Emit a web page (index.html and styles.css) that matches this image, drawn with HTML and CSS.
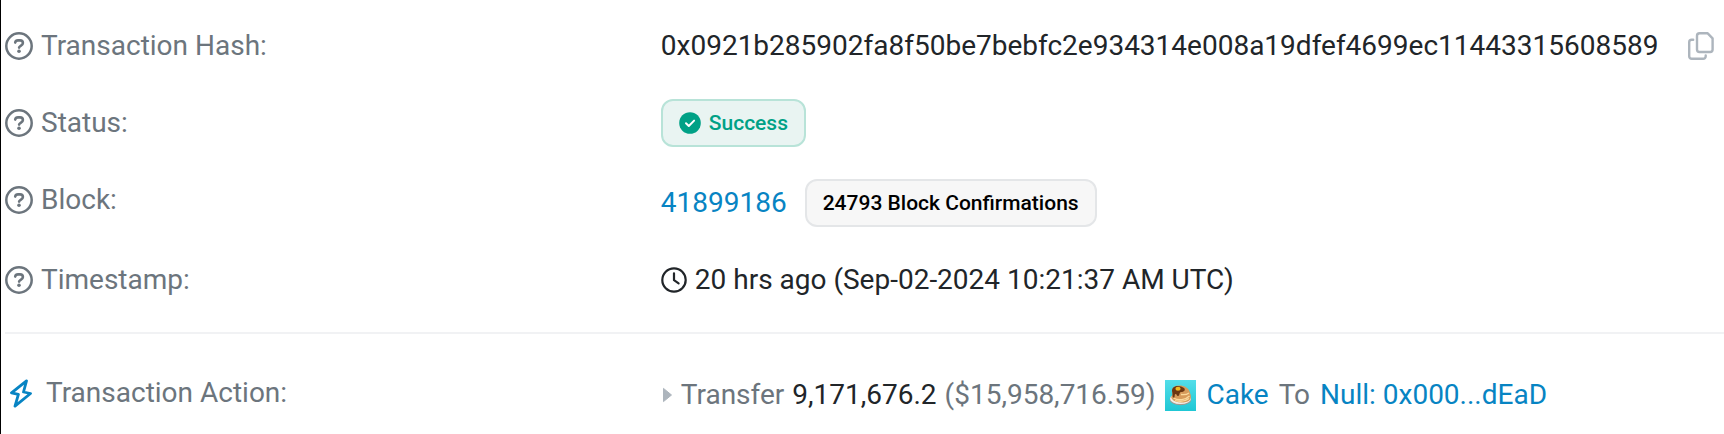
FILE: index.html
```html
<!DOCTYPE html>
<html lang="en">
<head>
  <meta charset="UTF-8">
  <title>Transaction Details</title>
  <meta name="viewport" content="width=device-width, initial-scale=1.0">
  <link rel="stylesheet" href="styles.css">
</head>
<body>
  <!-- shared icon -->
  <svg class="sprite" aria-hidden="true">
    <symbol id="help" viewBox="0 0 28 28">
      <circle cx="14" cy="14" r="12.7" fill="none" stroke="currentColor" stroke-width="2.5"/>
      <path d="M10.2 10.6c.3-1.500 1.300-2.200 2.800-2.200h2c1.800 0 2.900 1.100 2.900 2.600 0 1.300-.7 1.900-1.900 2.600-1.200.7-1.900 1-1.900 2" fill="none" stroke="currentColor" stroke-width="2.6" stroke-linecap="round"/>
      <circle cx="14" cy="19.3" r="1.800" fill="currentColor"/>
    </symbol>
  </svg>

  <main class="tx">
    <dl class="rows">
      <div class="row">
        <dt><svg class="help"><use href="#help"/></svg>Transaction Hash:</dt>
        <dd>
          <span id="hash">0x0921b285902fa8f50be7bebfc2e934314e008a19dfef4699ec11443315608589</span>
          <button class="copy" type="button" aria-label="Copy transaction hash">
            <svg viewBox="0 0 26 28" fill="none" stroke="currentColor" stroke-width="2.4" stroke-linejoin="round" stroke-linecap="round">
              <path d="M11.500 1.300h8.200l4.900 5v11.200a2.500 2.500 0 0 1-2.500 2.500h-10.600a2.500 2.500 0 0 1-2.500-2.500v-13.700a2.500 2.500 0 0 1 2.500-2.500z"/>
              <path d="M5.200 7.800h-1.500a2.500 2.500 0 0 0-2.500 2.500v14a2.500 2.500 0 0 0 2.500 2.500h11.500a2.500 2.500 0 0 0 2.500-2.500v-.8"/>
            </svg>
          </button>
        </dd>
      </div>
      <div class="row centered">
        <dt><svg class="help"><use href="#help"/></svg>Status:</dt>
        <dd>
          <span class="badge success">
            <svg class="check" viewBox="0 0 22 22">
              <circle cx="11" cy="11" r="10.800" fill="currentColor"/>
              <path d="M7 11.300l2.800 2.700 5.300-5.400" fill="none" stroke="#fff" stroke-width="2" stroke-linecap="round" stroke-linejoin="round"/>
            </svg>
            Success
          </span>
        </dd>
      </div>
      <div class="row">
        <dt><svg class="help"><use href="#help"/></svg>Block:</dt>
        <dd>
          <a class="block" href="#">41899186</a>
          <span class="badge">24793 Block Confirmations</span>
        </dd>
      </div>
      <div class="row">
        <dt><svg class="help"><use href="#help"/></svg>Timestamp:</dt>
        <dd>
          <svg class="clock" viewBox="0 0 26 26" fill="none" stroke="currentColor" stroke-width="2.200" stroke-linecap="round" stroke-linejoin="round">
            <circle cx="13" cy="13" r="11.700"/>
            <path d="M13 6.300v6.900l4.600 3.100"/>
          </svg>
          20 hrs ago (Sep-02-2024 10:21:37 AM UTC)
        </dd>
      </div>
    </dl>

    <hr>

    <dl class="rows">
      <div class="row">
        <dt class="action">
          <svg class="bolt" viewBox="0 0 22 29" fill="none" stroke="currentColor" stroke-width="2.800" stroke-linejoin="round">
            <path d="M16.500 1.800L1.500 13.900l6.900 1.500L5 27.200l15.500-12.700-7-1.500z"/>
          </svg>
          Transaction Action:
        </dt>
        <dd class="transfer">
          <svg class="caret" viewBox="0 0 12 18"><path d="M2.500 2.400v13.200L10.500 9z" fill="currentColor" stroke="currentColor" stroke-linejoin="round"/></svg>
          <span>Transfer</span>
          <span class="amount">9,171,676.2</span>
          <span>($15,958,716.59)</span>
          <svg class="token" viewBox="0 0 31 31">
            <defs>
              <linearGradient id="sky" x2="0" y2="1"><stop stop-color="#53dee9"/><stop offset="1" stop-color="#1fc7d4"/></linearGradient>
            </defs>
            <path d="M0 0h31v31H0z" fill="url(#sky)"/>
            <ellipse cx="15.500" cy="19.500" rx="10.800" ry="5.800" fill="#a3998f"/>
            <ellipse cx="15.500" cy="18.700" rx="10.500" ry="5.200" fill="#f4eee7"/>
            <path d="M7 11c0-8 17-7 18 2 2 4 1 8-4 9-6 1.500-12 0-14-3-1.500-2-.5-3 .5-4z" fill="#d79b5b"/>
            <path d="M8.500 18c5 3 12 2 16-2M10 20.500c5 1.500 10 1 14-2M16 14.500c3 .5 6 0 8-1.500" fill="none" stroke="#fbd99c" stroke-width="1.300"/>
            <path d="M7 11c0-6 8-6 12-3 2 2 0 4-3 4-2 0-1 4-3 4-1.500 0-1-2-2.500-2-1.500 0 0 4-2 3.500C7 17 8 14 7 11z" fill="#6b3713"/>
            <ellipse cx="13" cy="8.800" rx="2.600" ry="2" fill="#f2b91f"/>
          </svg>
          <a href="#">Cake</a>
          <span class="to">To</span>
          <a href="#">Null: 0x000...dEaD</a>
        </dd>
      </div>
    </dl>
  </main>

  <script>
    document.querySelector(".copy").onclick = function() {
      navigator.clipboard.writeText(document.getElementById("hash").textContent);
    }
  </script>
</body>
</html>
```
FILE: styles.css
```css
* {
  box-sizing: border-box;
}
body {
  margin: 0;
  font-family: Roboto, sans-serif;
  font-size: 28px;
  line-height: 42px;
  color: #212529;
  background-color: #fff;
}
.sprite {
  position: absolute;
  width: 0;
  height: 0;
}
.tx {
  min-height: 100vh;
  padding: 25px 0 0 4px;
  border-left: 1px solid #000;
}
.rows {
  display: grid;
  gap: 32px;
  margin: 0;
}
.row {
  display: grid;
  grid-template-columns: 38.15% 1fr;
  align-items: start;
}
.centered {
  align-items: center;
}
dt {
  display: flex;
  align-items: center;
  gap: 8px;
  color: #6c757d;
}
dd {
  display: flex;
  align-items: center;
  margin: 0;
  white-space: nowrap;
}
svg {
  display: block;
  flex: none;
}
a {
  color: #0784c3;
  text-decoration: none;
}
a:hover {
  color: #066a9c;
}
.help {
  width: 28px;
  height: 28px;
}
.copy {
  margin: 0 10px 0 auto;
  padding: 0;
  border: none;
  background: none;
  color: #adb5bd;
  cursor: pointer;
}
.copy svg {
  width: 26px;
  height: 28px;
}
.badge {
  display: flex;
  align-items: center;
  gap: 8px;
  height: 48px;
  padding: 0 16px;
  border: 2px solid #e4e6e8;
  border-radius: 12px;
  background-color: #f7f7f7;
  color: #000;
  font-size: 21px;
  font-weight: 500;
}
.success {
  border-color: #b8e3d8;
  background-color: #e9f4f2;
  color: #00a186;
}
.check {
  width: 22px;
  height: 22px;
}
.block {
  margin-right: 18px;
}
.clock {
  width: 26px;
  height: 26px;
  margin-right: 8px;
}
hr {
  height: 2px;
  margin: 31px 0 38px;
  border: none;
  background-color: #f1f2f4;
}
.action {
  gap: 14px;
  padding-left: 5px;
}
.bolt {
  width: 22px;
  height: 29px;
  color: #0784c3;
}
.transfer {
  gap: 8px;
  padding-top: 2px;
  color: #6c757d;
}
.caret {
  width: 12px;
  height: 18px;
  color: #adb5bd;
}
.amount {
  color: #212529;
}
.token {
  width: 31px;
  height: 31px;
}
.token, .to {
  margin: 0 2px;
}
```
